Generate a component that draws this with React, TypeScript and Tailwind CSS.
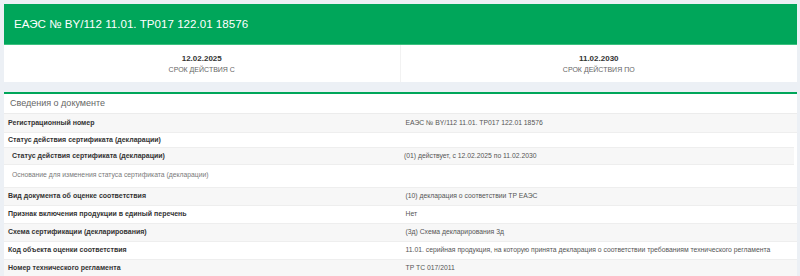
import React from "react";

const rows = [
  { label: "Вид документа об оценке соответствия", value: "(10) декларация о соответствии ТР ЕАЭС", gray: true },
  { label: "Признак включения продукции в единый перечень", value: "Нет", gray: false },
  { label: "Схема сертификации (декларирования)", value: "(3д) Схема декларирования 3д", gray: true },
  { label: "Код объекта оценки соответствия", value: "11.01. серийная продукция, на которую принята декларация о соответствии требованиям технического регламента", gray: false },
  { label: "Номер технического регламента", value: "ТР ТС 017/2011", gray: true },
];

export default function App() {
  return (
    <div
      className="w-[800px] h-[276px] overflow-hidden bg-[#ecf0f5] pt-[4px] pl-[4px] pr-[3px]"
      style={{ fontFamily: '"Liberation Sans", Arial, sans-serif' }}
    >
      <div className="h-[40px] bg-[#00a65a] flex items-center pl-[10px] text-white text-[11.6px]">
        ЕАЭС № BY/112 11.01. ТР017 122.01 18576
      </div>
      <div className="h-[1px] bg-[#3cc07f]" />
      <div className="h-[37px] bg-white grid grid-cols-2">
        <div className="flex flex-col items-center justify-center border-r border-[#f2f2f2]">
          <div className="text-[8px] font-bold text-[#333] leading-[10px]">12.02.2025</div>
          <div className="text-[7px] text-[#666] leading-[9px] mt-[1px]">СРОК ДЕЙСТВИЯ С</div>
        </div>
        <div className="flex flex-col items-center justify-center">
          <div className="text-[8px] font-bold text-[#333] leading-[10px]">11.02.2030</div>
          <div className="text-[7px] text-[#666] leading-[9px] mt-[1px]">СРОК ДЕЙСТВИЯ ПО</div>
        </div>
      </div>
      <div className="h-[10px]" />
      <div className="bg-white border-t-2 border-[#00a65a]">
        <div className="h-[20px] flex items-center pl-[6px] text-[9px] text-[#666] border-b border-[#ececec]">
          Сведения о документе
        </div>
        <div className="h-[19px] grid grid-cols-2 bg-[#f7f7f7] border-b border-[#eeeeee] items-center">
          <div className="pl-[4px] text-[7px] font-bold text-[#333]">Регистрационный номер</div>
          <div className="pl-[5px] text-[6.8px] text-[#555]">ЕАЭС № BY/112 11.01. ТР017 122.01 18576</div>
        </div>
        <div className="h-[14px] flex items-center pl-[4px] text-[7px] font-bold text-[#333]">
          Статус действия сертификата (декларации)
        </div>
        <div className="mr-[3px]">
          <div className="h-[18px] grid grid-cols-2 bg-[#f7f7f7] border-y border-[#eeeeee] items-center">
            <div className="pl-[8px] text-[7px] font-bold text-[#333]">Статус действия сертификата (декларации)</div>
            <div className="pl-[5px] text-[6.8px] text-[#555]">(01) действует, с 12.02.2025 по 11.02.2030</div>
          </div>
          <div className="h-[22px] pl-[8px] pt-[5px] text-[6.8px] text-[#7a7a7a]">
            Основание для изменения статуса сертификата (декларации)
          </div>
        </div>
        {rows.map((r) => (
          <div
            key={r.label}
            className={`h-[18px] grid grid-cols-2 border-t border-[#eeeeee] items-center ${r.gray ? "bg-[#f7f7f7]" : "bg-white"}`}
          >
            <div className="pl-[4px] text-[7px] font-bold text-[#333]">{r.label}</div>
            <div className="pl-[5px] text-[6.8px] text-[#555] whitespace-nowrap">{r.value}</div>
          </div>
        ))}
      </div>
    </div>
  );
}
